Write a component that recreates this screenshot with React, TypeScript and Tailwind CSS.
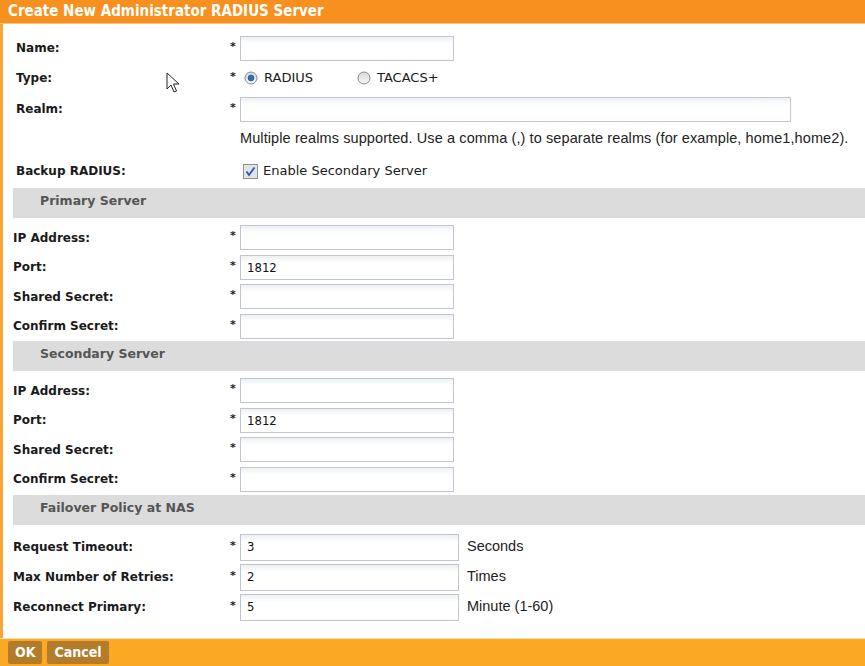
import React from 'react';

const sans = { fontFamily: '"DejaVu Sans", Verdana, sans-serif' };
const cond = { fontFamily: '"DejaVu Sans Condensed", "DejaVu Sans", sans-serif' };
const arial = { fontFamily: '"Liberation Sans", Arial, sans-serif' };

const Field = ({ value = '', w = 'w-[214px]', h = 'h-[25px]' }: { value?: string; w?: string; h?: string }) => (
  <div
    className={`${w} ${h} border border-[#c3c3d6] bg-gradient-to-b from-[#eef1f1] to-white to-[30%] flex items-center pl-[6px] text-[13px] text-[#111]`}
    style={cond}
  >
    {value}
  </div>
);

const Row = ({
  label,
  children,
  h = 'h-[29.5px]',
  lw = 'w-[217px]',
}: {
  label: string;
  children: React.ReactNode;
  h?: string;
  lw?: string;
}) => (
  <div className={`flex items-center ${h}`}>
    <div className={`${lw} shrink-0 font-bold text-[12px] text-[#1a1a1a]`}>{label}</div>
    <div className="flex items-center">{children}</div>
  </div>
);

const Star = () => <span className="w-[10px] shrink-0 text-[11px] leading-none text-[#222] font-bold -mt-[4px]">*</span>;

const StarRow = ({
  label,
  value,
  h,
  lw,
  unit,
  w,
  fh,
}: {
  label: string;
  value?: string;
  h?: string;
  lw?: string;
  unit?: string;
  w?: string;
  fh?: string;
}) => (
  <Row label={label} h={h} lw={lw}>
    <div className="flex items-center">
      <Star />
      <Field value={value} w={w} h={fh} />
      {unit && (
        <span className="ml-[8px] text-[14.5px] text-[#222]" style={arial}>
          {unit}
        </span>
      )}
    </div>
  </Row>
);

const Section = ({ title }: { title: string }) => (
  <div className="h-[30px] bg-[#dcdcdc] flex items-center pl-[27px] pb-[3px] font-bold text-[12.5px] text-[#555]">{title}</div>
);

const Radio = ({ checked }: { checked?: boolean }) => (
  <svg width="14" height="14" viewBox="0 0 14 14" className="shrink-0">
    <defs>
      <linearGradient id={checked ? 'rg1' : 'rg2'} x1="0" y1="0" x2="0" y2="1">
        <stop offset="0" stopColor="#d8d8d8" />
        <stop offset="1" stopColor="#f8f8f8" />
      </linearGradient>
    </defs>
    <circle cx="7" cy="7" r="6" fill={`url(#${checked ? 'rg1' : 'rg2'})`} stroke="#8a8a8a" strokeWidth="1" />
    {checked && <circle cx="7" cy="7" r="3" fill="#2a6fb8" stroke="#1c4f8a" strokeWidth="0.6" />}
  </svg>
);

const Checkbox = () => (
  <svg width="15" height="15" viewBox="0 0 15 15" className="shrink-0">
    <rect x="0.5" y="0.5" width="14" height="14" fill="#e6e8ec" stroke="#8e8f8f" />
    <rect x="2" y="2" width="11" height="11" fill="#dfe3ea" />
    <path d="M3.5 7.5 L6 11 L11.5 3.5" fill="none" stroke="#2c56b0" strokeWidth="1.8" />
  </svg>
);

const Cursor = () => (
  <svg width="14" height="22" viewBox="0 0 14 22" className="absolute left-[166px] top-[72px]">
    <path d="M1 1 L1 17 L5 13 L8 20 L10.5 19 L7.5 12 L13 12 Z" fill="white" stroke="#222" strokeWidth="1" strokeLinejoin="round" />
  </svg>
);

export default function App() {
  return (
    <div className="w-[865px] h-[666px] bg-white relative overflow-hidden" style={sans}>
      <div
        className="h-[24px] bg-[#f7901e] border-b border-[#fbc27a] flex items-center pl-[8px] text-white font-bold text-[15px]"
        style={cond}
      >
        Create New Administrator RADIUS Server
      </div>

      <div className="border-l-[3px] border-[#f9a533] h-[614px] flex flex-col">
        {/* top section */}
        <div className="pl-[13px] pt-[9px]">
          <StarRow label="Name:" h="h-[30px]" lw="w-[214px]" />
          <Row label="Type:" h="h-[30px]" lw="w-[214px]">
            <Star />
            <div className="flex items-center gap-[6px] ml-[4px] text-[13px] text-[#1a1a1a]">
              <Radio checked />
              <span>RADIUS</span>
            </div>
            <div className="flex items-center gap-[6px] ml-[44px] text-[13px] text-[#1a1a1a]">
              <Radio />
              <span>TACACS+</span>
            </div>
          </Row>
          <StarRow label="Realm:" h="h-[32px]" lw="w-[214px]" w="w-[551px]" />
          <div className="h-[28px] flex items-center pl-[224px] text-[14.5px] tracking-[0.1px] text-[#222]" style={arial}>
            Multiple realms supported. Use a comma (,) to separate realms (for example, home1,home2).
          </div>
          <div className="mt-[3px] mb-[2px]">
            <Row label="Backup RADIUS:" h="h-[30px]" lw="w-[214px]">
              <div className="flex items-center gap-[5px] ml-[13px] text-[13px] text-[#1a1a1a]">
                <Checkbox />
                <span>Enable Secondary Server</span>
              </div>
            </Row>
          </div>
        </div>

        <div className="pl-[10px]">
          <Section title="Primary Server" />
          <div className="pt-[5px]">
            <StarRow label="IP Address:" />
            <StarRow label="Port:" value="1812" />
            <StarRow label="Shared Secret:" />
            <StarRow label="Confirm Secret:" />
          </div>

          <Section title="Secondary Server" />
          <div className="pt-[5px]">
            <StarRow label="IP Address:" />
            <StarRow label="Port:" value="1812" />
            <StarRow label="Shared Secret:" />
            <StarRow label="Confirm Secret:" />
          </div>

          <div className="mt-[1px]">
            <Section title="Failover Policy at NAS" />
          </div>
          <div className="pt-[7px]">
            <StarRow label="Request Timeout:" value="3" h="h-[30px]" w="w-[219px]" fh="h-[27px]" unit="Seconds" />
            <StarRow label="Max Number of Retries:" value="2" h="h-[30px]" w="w-[219px]" fh="h-[27px]" unit="Times" />
            <StarRow label="Reconnect Primary:" value="5" h="h-[30px]" w="w-[219px]" fh="h-[27px]" unit="Minute (1-60)" />
          </div>
        </div>
      </div>

      <div
        className="absolute left-0 right-0 bottom-0 h-[28px] bg-[#fba925] border-t border-[#fde2b5] flex items-center gap-[5px] pl-[8px]"
        style={cond}
      >
        <div className="h-[23px] px-[7px] bg-[#b27c2b] rounded-[2px] flex items-center text-white font-bold text-[14px]">OK</div>
        <div className="h-[23px] px-[7px] bg-[#b27c2b] rounded-[2px] flex items-center text-white font-bold text-[14px]">Cancel</div>
      </div>

      <Cursor />
    </div>
  );
}
